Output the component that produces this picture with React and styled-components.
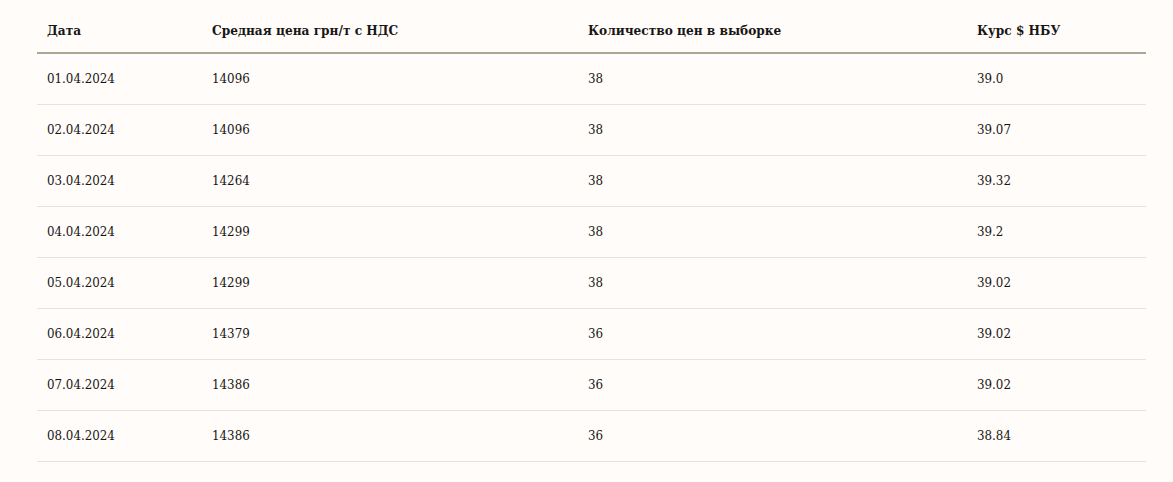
import React from "react";
import styled, { createGlobalStyle } from "styled-components";

const GlobalStyle = createGlobalStyle`
  *, *::before, *::after {
    box-sizing: border-box;
  }
  html, body {
    margin: 0;
    padding: 0;
    background: #fffcf9;
  }
  body {
    font-family: "DejaVu Serif", "Liberation Serif", serif;
    color: #161616;
  }
`;

const Page = styled.div`
  padding: 8px 27px 0 37px;
`;

const Table = styled.table`
  width: 100%;
  border-collapse: collapse;
  table-layout: fixed;
`;

const HeadCell = styled.th`
  width: ${(p) => p.$w}px;
  text-align: left;
  font-weight: 700;
  font-size: 13.5px;
  font-stretch: condensed;
  padding: 0 10px;
  height: 45px;
  border-bottom: 2px solid #a8a995;
  vertical-align: middle;
  white-space: nowrap;
`;

const Row = styled.tr`
  border-bottom: 1px solid #e6e3df;
`;

const Cell = styled.td`
  font-size: 13.2px;
  font-stretch: condensed;
  padding: 0 10px;
  height: 51px;
  vertical-align: middle;
  white-space: nowrap;
`;

const columns = [
  { title: "Дата", w: 165 },
  { title: "Средная цена грн/т с НДС", w: 376 },
  { title: "Количество цен в выборке", w: 389 },
  { title: "Курс $ НБУ", w: 179 },
];

const rows = [
  ["01.04.2024", "14096", "38", "39.0"],
  ["02.04.2024", "14096", "38", "39.07"],
  ["03.04.2024", "14264", "38", "39.32"],
  ["04.04.2024", "14299", "38", "39.2"],
  ["05.04.2024", "14299", "38", "39.02"],
  ["06.04.2024", "14379", "36", "39.02"],
  ["07.04.2024", "14386", "36", "39.02"],
  ["08.04.2024", "14386", "36", "38.84"],
];

export default function App() {
  return (
    <>
      <GlobalStyle />
      <Page>
        <Table>
          <thead>
            <tr>
              {columns.map((c) => (
                <HeadCell key={c.title} $w={c.w}>
                  {c.title}
                </HeadCell>
              ))}
            </tr>
          </thead>
          <tbody>
            {rows.map((r) => (
              <Row key={r[0]}>
                {r.map((v, i) => (
                  <Cell key={i}>{v}</Cell>
                ))}
              </Row>
            ))}
          </tbody>
        </Table>
      </Page>
    </>
  );
}
